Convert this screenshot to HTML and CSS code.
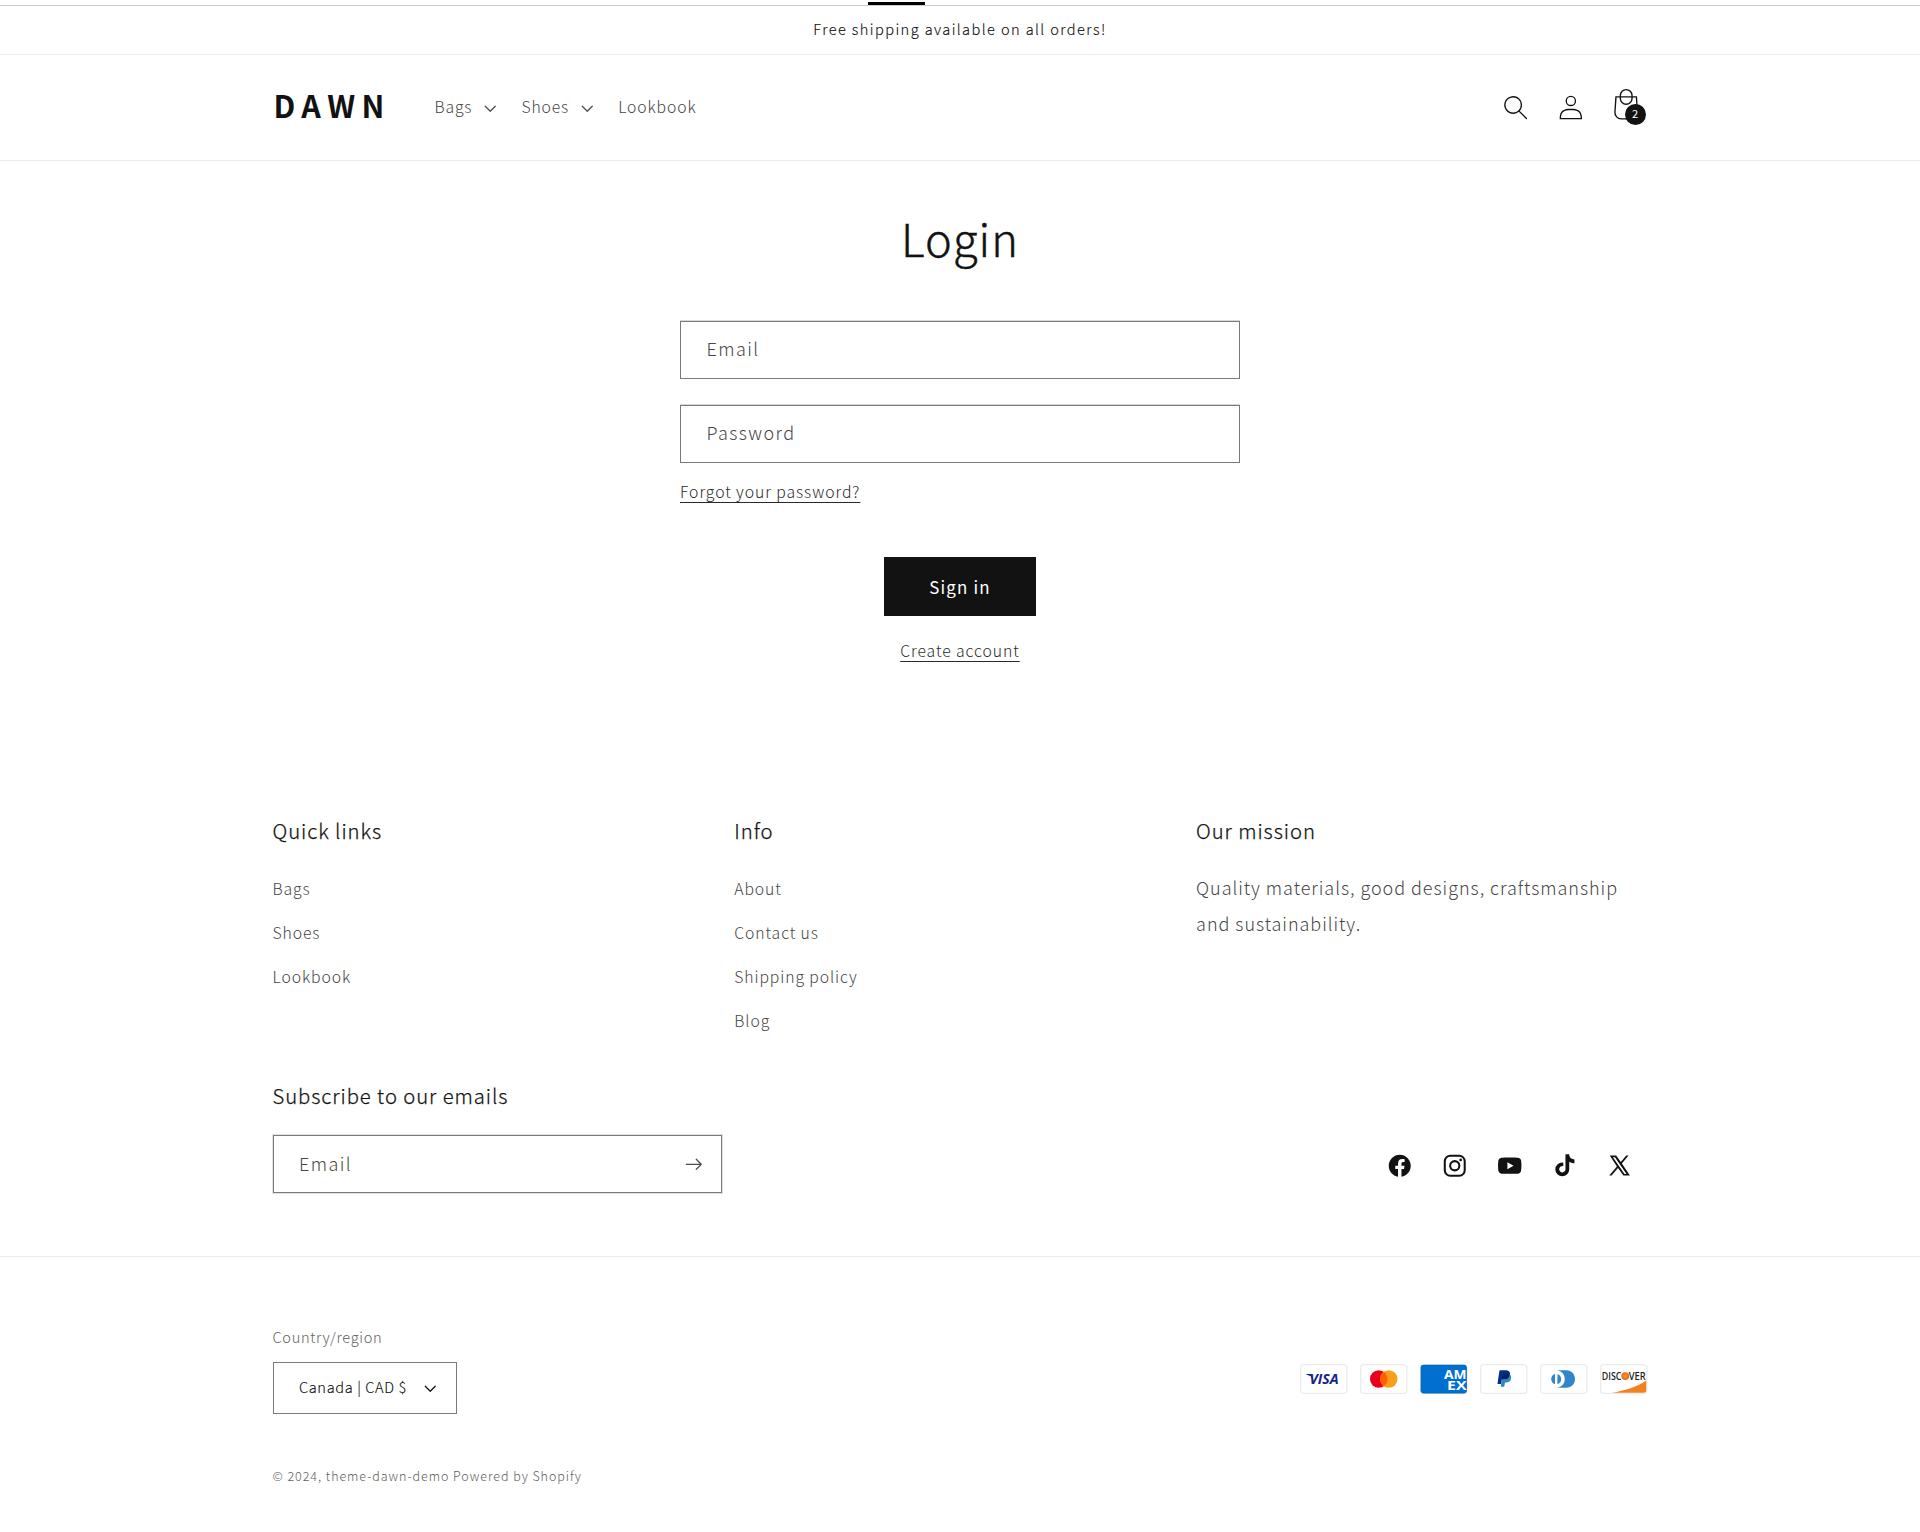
FILE: index.html
```html
<!DOCTYPE html>
<html lang="en">
<head>
<meta charset="utf-8">
<title>Account – theme-dawn-demo</title>
<link rel="stylesheet" href="styles.css">
</head>
<body>
<div class="preview-bar"><span class="preview-handle"></span></div>
<div class="announcement"><p class="announcement-text">Free shipping available on all orders!</p></div>

<header class="header">
  <div class="page header-inner">
    <a class="logo">DAWN</a>
    <nav class="nav">
      <a class="nav-item"><span class="nav-bags">Bags</span><svg class="caret" viewBox="0 0 10 6"><path d="M9.354.646a.5.5 0 00-.708 0L5 4.293 1.354.646a.5.5 0 00-.708.708l4 4a.5.5 0 00.708 0l4-4a.5.5 0 000-.708z"/></svg></a>
      <a class="nav-item"><span class="nav-shoes">Shoes</span><svg class="caret" viewBox="0 0 10 6"><path d="M9.354.646a.5.5 0 00-.708 0L5 4.293 1.354.646a.5.5 0 00-.708.708l4 4a.5.5 0 00.708 0l4-4a.5.5 0 000-.708z"/></svg></a>
      <a class="nav-item"><span>Lookbook</span></a>
    </nav>
    <div class="header-icons">
      <a class="header-icon"><svg class="icon" viewBox="0 0 18 19"><path fill-rule="evenodd" d="M11.03 11.68A5.784 5.784 0 112.85 3.5a5.784 5.784 0 018.18 8.18zm.26 1.12a6.78 6.78 0 11.72-.7l5.4 5.4a.5.5 0 11-.71.7l-5.41-5.4z"/></svg></a>
      <a class="header-icon"><svg class="icon" viewBox="0 0 18 19"><path fill-rule="evenodd" d="M6 4.5a3 3 0 116 0 3 3 0 01-6 0zm3-4a4 4 0 100 8 4 4 0 000-8zm5.58 12.15c1.12.82 1.83 2.24 1.91 4.85H1.51c.08-2.6.79-4.03 1.9-4.85C4.66 11.75 6.5 11.5 9 11.5s4.35.26 5.58 1.15zM9 10.5c-2.5 0-4.65.24-6.17 1.35C1.27 12.98.5 14.93.5 18v.5h17V18c0-3.07-.77-5.02-2.33-6.15-1.52-1.1-3.67-1.35-6.17-1.35z"/></svg></a>
      <a class="header-icon cart"><svg class="icon-cart" viewBox="0 0 40 40"><path fill-rule="evenodd" d="M20.5 6.5a4.75 4.75 0 00-4.75 4.75v.56h-3.16l-.77 11.6a5 5 0 004.99 5.34h7.38a5 5 0 004.99-5.33l-.78-11.61h-3.14v-.56a4.75 4.75 0 00-4.75-4.75zm3.75 5.31v-.56a3.75 3.75 0 10-7.5 0v.56zm-7.5 1h7.5v.56a3.75 3.75 0 11-7.5 0zm-1 0v.56a4.75 4.75 0 109.5 0v-.56h2.22l.71 10.67a4 4 0 01-3.99 4.27h-7.38a4 4 0 01-4-4.27l.72-10.67z"/></svg><span class="cart-count">2</span></a>
    </div>
  </div>
</header>

<main class="login">
  <h1 class="login-title">Login</h1>
  <form class="login-form">
    <div class="field field-main"><span>Email</span></div>
    <div class="field field-main"><span>Password</span></div>
    <a class="link forgot">Forgot your password?</a>
    <a class="button">Sign in</a>
    <a class="link create">Create account</a>
  </form>
</main>

<footer>
  <div class="page footer-top">
    <div class="footer-columns">
      <section>
        <h2 class="footer-heading">Quick links</h2>
        <ul class="footer-list"><li>Bags</li><li>Shoes</li><li>Lookbook</li></ul>
      </section>
      <section>
        <h2 class="footer-heading">Info</h2>
        <ul class="footer-list"><li>About</li><li>Contact us</li><li>Shipping policy</li><li>Blog</li></ul>
      </section>
      <section>
        <h2 class="footer-heading">Our mission</h2>
        <p class="mission">Quality materials, good designs, craftsmanship<br>and sustainability.</p>
      </section>
    </div>
    <div class="footer-middle">
      <div class="newsletter">
        <h2 class="footer-heading">Subscribe to our emails</h2>
        <div class="field field-news"><span>Email</span><svg class="arrow" viewBox="0 0 14 10"><path fill-rule="evenodd" d="M8.537.808a.5.5 0 01.817-.162l4 4a.5.5 0 010 .708l-4 4a.5.5 0 11-.708-.708L11.793 5.5H1a.5.5 0 010-1h10.793L8.646 1.354a.5.5 0 01-.109-.546z"/></svg></div>
      </div>
      <div class="social">
        <svg viewBox="0 0 20 20"><path d="M18 10.049C18 5.603 14.419 2 10 2c-4.419 0-8 3.603-8 8.049C2 14.067 4.925 17.396 8.75 18v-5.624H6.719v-2.328h2.03V8.275c0-2.017 1.195-3.132 3.023-3.132.874 0 1.79.158 1.79.158v1.98h-1.009c-.994 0-1.303.621-1.303 1.258v1.51h2.219l-.355 2.326H11.25V18c3.825-.604 6.75-3.933 6.75-7.951Z"/></svg>
        <svg viewBox="0 0 20 20"><rect x="2.75" y="2.75" width="14.5" height="14.5" rx="4" fill="none" stroke="#121212" stroke-width="1.5"/><circle cx="10" cy="10" r="3.35" fill="none" stroke="#121212" stroke-width="1.5"/><circle cx="14.27" cy="5.73" r=".98"/></svg>
        <svg viewBox="0 0 20 20"><path fill-rule="evenodd" d="M18.16 5.87c.34 1.309.34 4.08.34 4.08s0 2.771-.34 4.08a2.125 2.125 0 0 1-1.53 1.53c-1.309.34-6.63.34-6.63.34s-5.321 0-6.63-.34a2.125 2.125 0 0 1-1.53-1.53c-.34-1.309-.34-4.08-.34-4.08s0-2.771.34-4.08a2.173 2.173 0 0 1 1.53-1.53C4.679 4 10 4 10 4s5.321 0 6.63.34a2.173 2.173 0 0 1 1.53 1.53ZM8.3 12.5l4.42-2.55L8.3 7.4v5.1Z"/></svg>
        <svg viewBox="0 0 20 20"><path d="M10.511 1.705h2.74s-.157 3.51 3.795 3.768v2.711s-2.114.129-3.796-1.158l.028 5.606A5.073 5.073 0 1 1 8.213 7.56h.708v2.785a2.298 2.298 0 1 0 1.618 2.205L10.51 1.705Z"/></svg>
        <svg viewBox="0 0 20 20"><path fill-rule="evenodd" d="M2.7 2.6h4.7l3.36 4.65 3.96-4.65h1.7l-4.88 5.7 5.86 8.8h-4.75L8.72 11.6 4.05 17.1H2.35l5.6-6.58ZM5 3.75l8.45 12.2h1.45L6.5 3.75Z"/></svg>
      </div>
    </div>
  </div>

  <div class="footer-bottom">
    <div class="page">
      <div class="footer-row">
        <div>
          <h2 class="country-label">Country/region</h2>
          <div class="country-select"><span class="country-value">Canada | CAD $</span><svg class="caret" viewBox="0 0 10 6"><path d="M9.354.646a.5.5 0 00-.708 0L5 4.293 1.354.646a.5.5 0 00-.708.708l4 4a.5.5 0 00.708 0l4-4a.5.5 0 000-.708z"/></svg></div>
        </div>
        <div class="payments">
          <svg viewBox="0 0 38 24"><rect class="card" x=".5" y=".5" width="37" height="23" rx="2.5"/><path fill="#142688" d="M5 8h4l2.2 6.4L8.6 9.7 5 8.4z"/><text class="visa" x="7.6" y="16" textLength="23.4" lengthAdjust="spacingAndGlyphs">VISA</text></svg>
          <svg viewBox="0 0 38 24"><rect class="card" x=".5" y=".5" width="37" height="23" rx="2.5"/><circle fill="#EB001B" cx="15" cy="12" r="7"/><circle fill="#F79E1B" cx="23" cy="12" r="7"/><path fill="#FF5F00" d="M22 12c0-2.4-1.2-4.5-3-5.7-1.8 1.3-3 3.4-3 5.7s1.2 4.5 3 5.7c1.8-1.2 3-3.3 3-5.7z"/></svg>
          <svg viewBox="0 0 38 24"><rect class="card amex-card" x=".5" y=".5" width="37" height="23" rx="2.5"/><text class="amex" x="19.2" y="12.2" textLength="18" lengthAdjust="spacingAndGlyphs">AM</text><text class="amex" x="21.6" y="20.4" textLength="15.6" lengthAdjust="spacingAndGlyphs">EX</text></svg>
          <svg viewBox="0 0 38 24"><rect class="card" x=".5" y=".5" width="37" height="23" rx="2.5"/><path fill="#003087" d="M23.9 8.3c.2-1 0-1.7-.6-2.3-.6-.7-1.7-1-3.1-1h-4.1c-.3 0-.5.2-.6.5L14 15.6c0 .2.1.4.3.4H17l.4-3.4 1.8-2.2 4.7-2.1z"/><path fill="#3086C8" d="M23.9 8.3l-.2.2c-.5 2.8-2.2 3.8-4.6 3.8H18c-.3 0-.5.2-.6.5l-.6 3.9-.2 1c0 .2.1.4.3.4H19c.3 0 .5-.2.5-.4v-.1l.4-2.4v-.1c0-.2.3-.4.5-.4h.3c2.1 0 3.7-.8 4.1-3.2.2-1 .1-1.8-.4-2.4-.1-.5-.3-.7-.5-.8z"/><path fill="#012169" d="M23.3 8.1c-.1-.1-.2-.1-.3-.1-.1 0-.2 0-.3-.1-.3-.1-.7-.1-1.1-.1h-3c-.1 0-.2 0-.2.1-.2.1-.3.2-.3.4l-.7 4.4v.1c0-.3.3-.5.6-.5h1.3c2.5 0 4.1-1 4.6-3.8v-.2c-.1-.1-.3-.2-.5-.2h-.1z"/></svg>
          <svg viewBox="0 0 38 24"><rect class="card" x=".5" y=".5" width="37" height="23" rx="2.5"/><path fill="#3086C8" d="M12 12v3.7c0 .3-.2.3-.5.2-1.9-.8-3-3.3-2.3-5.4.4-1.1 1.2-2 2.3-2.4.4-.2.5-.1.5.2V12zm2 0V8.3c0-.3 0-.3.3-.2 2.1.8 3.2 3.3 2.4 5.4-.4 1.1-1.2 2-2.4 2.4-.4.2-.4.1-.4-.2V12zm7.2-7H13c3.8 0 6.8 3.1 6.8 7s-3 7-6.8 7h8.2c3.8 0 6.8-3.1 6.8-7s-3-7-6.8-7z"/></svg>
          <svg viewBox="0 0 38 24"><defs><radialGradient id="sun"><stop offset="0" stop-color="#F9A021"/><stop offset="1" stop-color="#E9611F"/></radialGradient></defs><rect class="card" x=".5" y=".5" width="37" height="23" rx="2.5"/><path fill="#F48120" d="M37 13.2V21a2 2 0 0 1-2 2H9.3C20 21.4 30 18 37 13.2z"/><text class="discover" x="1.4" y="12.5" textLength="15.8" lengthAdjust="spacingAndGlyphs">DISC</text><circle fill="url(#sun)" cx="20.2" cy="9.6" r="3.1"/><text class="discover" x="23" y="12.5" textLength="13.6" lengthAdjust="spacingAndGlyphs">VER</text></svg>
        </div>
      </div>
      <p class="copyright">© 2024, theme-dawn-demo Powered by Shopify</p>
    </div>
  </div>
</footer>
</body>
</html>
```
FILE: styles.css
```css
* { box-sizing: border-box; }
body {
  margin: 0;
  background: #fff;
  color: #121212;
  font-family: "Noto Sans CJK JP", "Noto Sans", sans-serif;
  font-weight: 300;
  font-size: 18px;
  letter-spacing: .94px;
}
h1, h2, p, ul { margin: 0; padding: 0; font-weight: 300; }
ul { list-style: none; }
svg { display: block; fill: #121212; }
.page { width: 1375px; margin: 0 auto; }

.preview-bar { height: 6px; border-bottom: 1px solid #ccc; padding: 2px 0 0 868px; }
.preview-handle { display: block; width: 57px; height: 3px; background: #000; }
.announcement { height: 49px; border-bottom: 1px solid #ebebeb; text-align: center; }
.announcement-text { font-size: 14.6px; line-height: 45px; letter-spacing: 1.41px; color: #080808; -webkit-text-stroke: .1px #121212; }

.header { height: 106px; border-bottom: 1px solid #ebebeb; }
.header-inner { display: flex; align-items: center; height: 105px; }
.logo { width: 162px; padding-left: 1px; font-size: 30.5px; line-height: 40px; font-weight: 700; letter-spacing: 6.4px; margin-top: -5px; }
.nav { display: flex; gap: 25px; line-height: 28px; font-size: 15.75px; letter-spacing: .86px; color: #454545; margin-top: -1px; }
.nav-item { display: flex; align-items: center; gap: 11.6px; }
.caret { width: 12.5px; height: 7.5px; margin-top: 3px; }
.nav .caret { fill: #4d4d4d; }
.header-icons { display: flex; align-items: center; margin-left: auto; margin-right: -5px; }
.header-icon { position: relative; display: flex; align-items: center; justify-content: center; width: 55px; height: 55px; }
.icon { height: 25px; width: 23.7px; margin-left: 1.2px; }
.icon-cart { width: 55px; height: 55px; }
.cart-count { position: absolute; left: 27px; top: 23.5px; width: 21px; height: 21px; border-radius: 50%; background: #121212; color: #fff; font-size: 11.2px; line-height: 19px; font-weight: 400; text-align: center; letter-spacing: 0; }

.login { width: 560px; margin: 0 auto; padding-top: 44px; height: 655px; }
.login-title { font-size: 45.2px; line-height: 66px; text-align: center; letter-spacing: 1px; -webkit-text-stroke: .4px #121212; }
.login-form { display: flex; flex-direction: column; padding-top: 50px; }
.field { display: flex; align-items: center; height: 58px; border: 1px solid #7a7a7a; padding: 0 19px 0 25.5px; font-size: 18px; line-height: 30px; letter-spacing: 1.4px; color: #454545; box-shadow: 0 0 0 1px #e2e2e2; }
.field span { margin-top: -5px; }
.field-news span { margin-top: -3px; }
.field-main { margin-bottom: 26px; box-shadow: 0 -1px 0 #d8d8d8; }
.link { font-size: 15.75px; line-height: 28px; color: #2a2a2a; text-decoration: underline; text-decoration-thickness: 1px; text-underline-offset: 4px; }
.forgot { align-self: flex-start; margin-top: -11px; }
.button { align-self: center; width: 152px; height: 59px; margin-top: 51px; background: #121212; color: #fff; font-size: 16.9px; line-height: 59px; letter-spacing: 1.2px; text-align: center; font-weight: 400; }
.create { align-self: center; margin-top: 21px; }

.footer-columns { display: grid; grid-template-columns: repeat(3, 451px); column-gap: 10.8px; height: 265px; }
.footer-heading { font-size: 20.25px; line-height: 30px; -webkit-text-stroke: .25px #121212; }
.footer-list { padding-top: 21px; font-size: 15.75px; line-height: 44px; letter-spacing: .9px; color: #454545; }
.mission { padding-top: 23px; line-height: 36px; letter-spacing: .96px; color: #454545; white-space: nowrap; }
.footer-middle { display: flex; justify-content: space-between; height: 175px; }
.newsletter { width: 449.5px; }
.field-news { margin-top: 24px; }
.arrow { width: 17.5px; height: 12.5px; margin-left: auto; fill: #4d4d4d; }
.social { display: flex; gap: 27.5px; padding: 71px 14px 0 0; }
.social svg { width: 27.5px; height: 27.5px; }

.footer-bottom { border-top: 1px solid #ebebeb; padding-top: 68px; }
.footer-row { display: flex; justify-content: space-between; }
.country-label { font-size: 14.6px; line-height: 24px; color: #626262; letter-spacing: .68px; }
.country-select { display: flex; align-items: center; justify-content: space-between; width: 184px; height: 52px; margin-top: 13px; padding: 0 19px 0 25.5px; border: 1px solid #7a7a7a; font-size: 14.6px; line-height: 24px; letter-spacing: .62px; }
.country-value { margin-top: -2px; color: #080808; -webkit-text-stroke: .1px #121212; }
.country-select .caret { margin-top: 2px; }
.payments { display: flex; gap: 12.5px; padding-top: 39px; }
.payments svg { width: 47.5px; height: 30px; }
.card { fill: #fff; stroke: #000; stroke-opacity: .08; }
.amex-card { fill: #006fcf; }
.payments text { font-family: "Open Sans", "Noto Sans", sans-serif; font-weight: 700; letter-spacing: 0; }
.visa { font-size: 11.2px; font-style: italic; fill: #142688; }
.amex { font-size: 10.4px; fill: #fff; }
.payments .discover { font-size: 8.2px; font-weight: 600; fill: #231f20; }
.copyright { margin-top: 50px; font-size: 12.5px; line-height: 24px; letter-spacing: .95px; color: #606060; }
```
